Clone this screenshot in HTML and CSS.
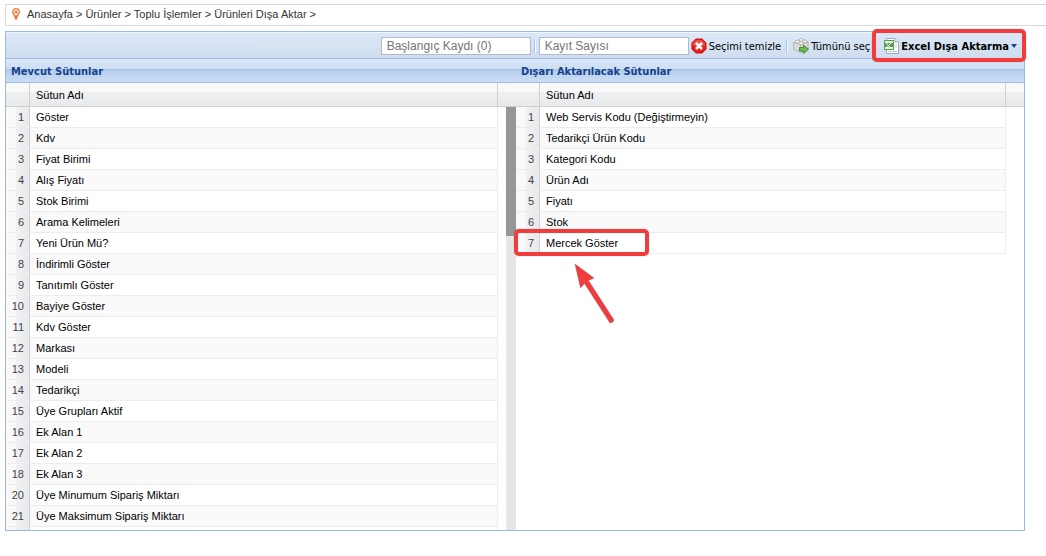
FILE: index.html
```html
<!DOCTYPE html>
<html lang="tr">
<head>
<meta charset="utf-8">
<title>Ürünleri Dışa Aktar</title>
<link rel="stylesheet" href="styles.css">
</head>
<body>
<nav class="breadcrumb" aria-label="Konum">
  <svg class="pin" width="8" height="12" viewBox="0 0 8 12" aria-hidden="true"><path d="M4 .7C2.100.7.7 2.100.7 3.900.7 5.600 3 7.500 4 11.200 5 7.500 7.300 5.600 7.300 3.900 7.300 2.100 5.900.7 4 .7z" fill="#fff4ec" stroke="#ee7330" stroke-width="1.300"/><circle cx="4" cy="3.900" r="1.500" fill="#ee7330"/><path d="M3.200 7.200h1.600L4 11.500z" fill="#ee7330"/></svg>
  <span><a href="#">Anasayfa</a> &gt; <a href="#">Ürünler</a> &gt; <a href="#">Toplu İşlemler</a> &gt; <a href="#">Ürünleri Dışa Aktar</a> &gt;</span>
</nav>
<main class="panel">
  <div class="toolbar">
    <input class="field" type="text" placeholder="Başlangıç Kaydı (0)" aria-label="Başlangıç Kaydı">
    <span class="separator"></span>
    <input class="field" type="text" placeholder="Kayıt Sayısı" aria-label="Kayıt Sayısı">
    <button class="tool" type="button">
      <svg width="16" height="16" viewBox="0 0 16 16" aria-hidden="true"><path d="M4.800 1h6.400L15 4.800v6.400L11.200 15H4.800L1 11.200V4.800z" fill="#e8211d" stroke="#c40d10"/><path d="M5.200 2h5.600L14 5.200v2.300H2V5.200z" fill="#f5655b" opacity=".7"/><path d="M5 5l6 6M11 5l-6 6" stroke="#fff" stroke-width="2.600"/></svg>
      Seçimi temizle
    </button>
    <span class="separator"></span>
    <button class="tool" type="button">
      <svg width="16" height="16" viewBox="0 0 16 16" aria-hidden="true"><path d="M.7 4.500L8 1l7 3v7l-7.500 3.500L.7 11z" fill="#dcdcda" stroke="#a2a29e" stroke-width=".8"/><path d="M.7 4.500L7.500 7 15 4M7.500 7v7.500" fill="none" stroke="#b5b5b1" stroke-width=".8"/><g fill="#f8f8f6" stroke="#a2a29e" stroke-width=".7"><ellipse cx="4.500" cy="3.600" rx="2.100" ry="1.400"/><ellipse cx="8.200" cy="1.900" rx="2.100" ry="1.300"/><ellipse cx="8" cy="5.200" rx="2.100" ry="1.400"/><ellipse cx="11.800" cy="3.500" rx="2.100" ry="1.400"/></g><path d="M6.500 9.500h4V7l5 4.300-5 4.300V13h-4z" fill="#6fbd50" stroke="#36852b" stroke-width=".9"/></svg>
      Tümünü seç
    </button>
    <button class="tool tool-export" type="button">
      <svg width="16" height="16" viewBox="0 0 16 16" aria-hidden="true"><path d="M3.500.5h8.500l3.500 3.500v11.500h-12z" fill="#fff" stroke="#9caac0"/><path d="M12 .5V4h3.500" fill="#e3e9f2" stroke="#9caac0"/><path d="M1 2h10v10H1z" fill="#5a9c50"/><path d="M2 3h8v2H2zM2 9h8v2H2z" fill="#e2f0dc"/><path d="M3 5l5 5M8 5l-5 5" stroke="#fff" stroke-width="1"/><path d="M12 7h2M12 9h2M5 13.500h9" stroke="#c3d3bf"/></svg>
      Excel Dışa Aktarma
      <span class="caret"></span>
    </button>
  </div>
  <div class="grids">
    <section class="grid">
      <h2 class="title">Mevcut Sütunlar</h2>
      <div class="viewport">
        <table class="table">
          <thead><tr><th class="num"></th><th>Sütun Adı</th><th class="spare"></th></tr></thead>
          <tbody>
            <tr><td class="num">1</td><td>Göster</td></tr>
            <tr><td class="num">2</td><td>Kdv</td></tr>
            <tr><td class="num">3</td><td>Fiyat Birimi</td></tr>
            <tr><td class="num">4</td><td>Alış Fiyatı</td></tr>
            <tr><td class="num">5</td><td>Stok Birimi</td></tr>
            <tr><td class="num">6</td><td>Arama Kelimeleri</td></tr>
            <tr><td class="num">7</td><td>Yeni Ürün Mü?</td></tr>
            <tr><td class="num">8</td><td>İndirimli Göster</td></tr>
            <tr><td class="num">9</td><td>Tanıtımlı Göster</td></tr>
            <tr><td class="num">10</td><td>Bayiye Göster</td></tr>
            <tr><td class="num">11</td><td>Kdv Göster</td></tr>
            <tr><td class="num">12</td><td>Markası</td></tr>
            <tr><td class="num">13</td><td>Modeli</td></tr>
            <tr><td class="num">14</td><td>Tedarikçi</td></tr>
            <tr><td class="num">15</td><td>Üye Grupları Aktif</td></tr>
            <tr><td class="num">16</td><td>Ek Alan 1</td></tr>
            <tr><td class="num">17</td><td>Ek Alan 2</td></tr>
            <tr><td class="num">18</td><td>Ek Alan 3</td></tr>
            <tr><td class="num">20</td><td>Üye Minumum Sipariş Miktarı</td></tr>
            <tr><td class="num">21</td><td>Üye Maksimum Sipariş Miktarı</td></tr>
            <tr><td class="num"></td><td></td></tr>
          </tbody>
        </table>
        <div class="scrollbar"><div class="thumb"></div></div>
      </div>
    </section>
    <section class="grid">
      <h2 class="title">Dışarı Aktarılacak Sütunlar</h2>
      <div class="viewport">
        <table class="table">
          <thead><tr><th class="num"></th><th>Sütun Adı</th><th class="spare"></th></tr></thead>
          <tbody>
            <tr><td class="num">1</td><td>Web Servis Kodu (Değiştirmeyin)</td></tr>
            <tr><td class="num">2</td><td>Tedarikçi Ürün Kodu</td></tr>
            <tr><td class="num">3</td><td>Kategori Kodu</td></tr>
            <tr><td class="num">4</td><td>Ürün Adı</td></tr>
            <tr><td class="num">5</td><td>Fiyatı</td></tr>
            <tr><td class="num">6</td><td>Stok</td></tr>
            <tr><td class="num">7</td><td>Mercek Göster</td></tr>
          </tbody>
        </table>
      </div>
      <div class="callout row-callout"></div>
      <svg class="arrow" width="42" height="62" viewBox="0 0 42 62" aria-hidden="true"><path d="M1 1L20 15 14.500 17.500 40 57Q39 60 36 60L10.500 20.500 6.500 25z" fill="#f23b3b" stroke="#99696d" stroke-width=".5"/></svg>
    </section>
  </div>
</main>
</body>
</html>
```

FILE: styles.css
```css
*,
*::before,
*::after {
  box-sizing: border-box;
}

body {
  display: flex;
  flex-direction: column;
  gap: 5px;
  height: 100vh;
  margin: 0;
  padding: 4px 0 25px 5px;
  overflow: hidden;
  background: #fff;
  color: #000;
  font-family: "Liberation Sans", Arial, sans-serif;
  font-size: 11px;
}

.breadcrumb {
  display: flex;
  flex: none;
  align-items: center;
  gap: 7px;
  height: 22px;
  padding: 0 6px 2px;
  border: 1px solid #d8d8d8;
  border-right: 0;
  color: #333;
}

.breadcrumb a {
  color: inherit;
  text-decoration: none;
}

.panel {
  display: flex;
  flex: 1;
  flex-direction: column;
  min-height: 0;
  margin-right: 21px;
  border: 1px solid #99bbe8;
}

.toolbar {
  display: flex;
  flex: none;
  align-items: center;
  justify-content: flex-end;
  height: 26px;
  padding-right: 7px;
  border-top: 1px solid #f1f6fc;
  background: linear-gradient(#dce8f6, #cfddef);
}

.field {
  width: 150px;
  height: 18px;
  padding: 0 5px;
  border: 1px solid #b5b8c8;
  background: #fff;
  font: 12px "Liberation Sans", Arial, sans-serif;
}

.field::placeholder {
  color: #757575;
}

.separator {
  width: 2px;
  height: 14px;
  margin: 0 3px;
  border-left: 1px solid #98c8ff;
  border-right: 1px solid #fff;
}

.tool {
  display: flex;
  align-items: center;
  gap: 2px;
  padding: 1px 2px 0;
  border: 0;
  background: none;
  color: #000;
  font: 11px "DejaVu Sans Condensed", Tahoma, sans-serif;
  white-space: nowrap;
}

.tool-export {
  position: relative;
  margin-left: 9px;
  padding-right: 0;
  font-weight: bold;
}

.tool-export::after,
.callout {
  position: absolute;
  z-index: 1;
  border: 4px solid #f23b3b;
  border-radius: 5px;
  box-shadow: 0 0 1px #777;
}

.tool-export::after {
  content: "";
  inset: -8px -9px;
}

.row-callout {
  top: 171px;
  left: -2px;
  width: 135px;
  height: 27px;
}

.caret {
  border: 3px solid transparent;
  border-top: 4px solid #15428b;
  border-bottom: 0;
}

.grids {
  display: grid;
  flex: 1;
  grid-template-columns: 510fr 508fr;
  grid-template-rows: minmax(0, 1fr);
  min-height: 0;
}

.grid {
  position: relative;
  display: flex;
  flex-direction: column;
  min-width: 0;
}

.title {
  flex: none;
  height: 25px;
  margin: 0;
  padding: 0 5px;
  border-top: 1px solid #99bbe8;
  border-bottom: 1px solid #99bbe8;
  background: linear-gradient(#dae7f6 0, #cddef3 10px, #9fc0ea 10px, #abc7ec 11px, #b7cfee 12px, #cbddf3 23px);
  color: #15428b;
  font: bold 11px/25px "DejaVu Sans Condensed", Tahoma, sans-serif;
}

.viewport {
  position: relative;
  flex: 1;
  min-height: 0;
  overflow: hidden;
}

.table {
  width: 100%;
  border-collapse: separate;
  border-spacing: 0;
  table-layout: fixed;
}

.table th,
.table td {
  padding: 0 6px;
  text-align: left;
  white-space: nowrap;
}

.table th {
  height: 24px;
  border-right: 1px solid #d0d0d0;
  border-bottom: 1px solid #d0d0d0;
  background: linear-gradient(#f9f9f9 9px, #eff0f1 9px, #e9eaeb);
  font-weight: normal;
}

.table .num {
  width: 24px;
  padding: 0 5px 0 0;
  text-align: right;
}

.table .spare {
  width: 18px;
  border-right: 0;
}

.table td {
  height: 21px;
  border-right: 1px solid #ededed;
  border-bottom: 1px solid #ededed;
}

.table tbody tr:nth-child(even) {
  background: linear-gradient(90deg, #fafafa, #fafafa) no-repeat 0 0 / calc(100% - 18px) 100%;
}

.table td.num {
  border-right-color: #d0d0d0;
  background: linear-gradient(90deg, #f9f9f9 10px, #f0f1f2 10px, #e7e9ec);
  color: #444;
}

.scrollbar {
  position: absolute;
  top: 24px;
  right: 0;
  bottom: 0;
  width: 10px;
  background: #e5e5e5;
}

.thumb {
  height: 129px;
  background: #969696;
}

.arrow {
  position: absolute;
  top: 205px;
  left: 58px;
}
```
